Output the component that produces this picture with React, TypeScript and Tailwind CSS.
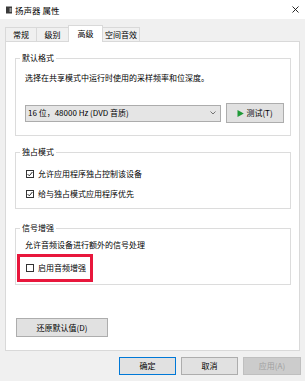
const font = { fontFamily: '"Noto Sans CJK SC", "Noto Sans", sans-serif' };

const tabs = [
  { label: "常规", w: "w-[32px]" },
  { label: "级别", w: "w-[33px]" },
  { label: "高级", w: "w-[35px]", active: true },
  { label: "空间音效", w: "w-[38px]" },
];

function CheckBox({ checked }: { checked?: boolean }) {
  return (
    <span className="flex h-[8px] w-[8px] shrink-0 items-center justify-center border border-[#333] bg-white">
      {checked && (
        <svg width="6" height="6" viewBox="0 0 6 6">
          <path d="M0.6 3.1 L2.3 4.8 L5.4 1" fill="none" stroke="#222" strokeWidth="1" />
        </svg>
      )}
    </span>
  );
}

function Group({ label, className, children }: { label: string; className: string; children: React.ReactNode }) {
  return (
    <div className={`relative ml-[9px] w-[276px] border border-[#dcdcdc] ${className}`}>
      <span className="absolute -top-[6px] left-[4px] bg-white px-[2px] text-[8px] leading-[10px] text-black">
        {label}
      </span>
      {children}
    </div>
  );
}

export default function App() {
  return (
    <div className="h-[381px] w-[305px] overflow-hidden bg-[#f0f0f0] text-black" style={font}>
      {/* title bar */}
      <div className="flex h-[19px] items-center bg-white pl-[6px] pr-[6px]">
        <svg width="7" height="8" viewBox="0 0 7 8" className="mr-[2px]">
          <rect x="0" y="0.5" width="6" height="7" fill="#3a3a3a" />
          <rect x="3.5" y="2" width="2" height="4" fill="#9a9a9a" />
        </svg>
        <span className="text-[8.5px] leading-[10px]">扬声器 属性</span>
        <svg width="7" height="7" viewBox="0 0 7 7" className="ml-auto">
          <path d="M0.5 0.5 L6.5 6.5 M6.5 0.5 L0.5 6.5" stroke="#111" strokeWidth="0.9" />
        </svg>
      </div>

      {/* tabs */}
      <div className="flex h-[22px] items-end pl-[5px] pt-[6px]">
        {tabs.map((t) =>
          t.active ? (
            <div
              key={t.label}
              className={`relative z-10 -mb-px -ml-px flex h-[17px] items-center justify-center border border-b-0 border-[#d9d9d9] bg-white text-[8px] ${t.w}`}
            >
              {t.label}
            </div>
          ) : (
            <div
              key={t.label}
              className={`-ml-px flex h-[14px] items-center justify-center border border-b-0 border-[#d9d9d9] bg-[#f0f0f0] text-[8px] first:ml-0 ${t.w}`}
            >
              {t.label}
            </div>
          )
        )}
      </div>

      {/* panel */}
      <div className="ml-[5px] w-[295px] border border-[#d9d9d9] bg-white pb-[13px] pt-[16px] text-[8px]">
        <Group label="默认格式" className="h-[78px] pl-[9px] pt-[14px]">
          <div className="leading-[10px]">选择在共享模式中运行时使用的采样频率和位深度。</div>
          <div className="mt-[20px] flex items-center gap-[5px]">
            <div className="flex h-[17px] w-[196px] items-center justify-between border border-[#acacac] bg-[#e5e5e5] pl-[2px] pr-[4px]">
              <span>16 位，48000 Hz (DVD 音质)</span>
              <svg width="6" height="4" viewBox="0 0 6 4">
                <path d="M0.5 0.5 L3 3 L5.5 0.5" fill="none" stroke="#555" strokeWidth="0.8" />
              </svg>
            </div>
            <div className="flex h-[20px] w-[58px] items-center justify-center gap-[2px] border border-[#adadad] bg-[#e1e1e1]">
              <svg width="7" height="7" viewBox="0 0 7 7">
                <path d="M0.5 0 L6.8 3.5 L0.5 7 Z" fill="#1e9a37" />
              </svg>
              <span>测试(T)</span>
            </div>
          </div>
        </Group>

        <Group label="独占模式" className="mt-[16px] h-[57px] pl-[10px] pt-[15px]">
          <div className="flex h-[12px] items-center gap-[4px]">
            <CheckBox checked />
            <span>允许应用程序独占控制该设备</span>
          </div>
          <div className="mt-[8px] flex h-[12px] items-center gap-[4px]">
            <CheckBox checked />
            <span>给与独占模式应用程序优先</span>
          </div>
        </Group>

        <Group label="信号增强" className="mt-[19px] h-[57px] pt-[11px]">
          <div className="ml-[9px] leading-[10px]">允许音频设备进行额外的信号处理</div>
          <div className="ml-[1px] mt-[4px] flex h-[28px] w-[76px] items-center gap-[4px] border-[3px] border-[#e8173c] pl-[6px]">
            <CheckBox />
            <span>启用音频增强</span>
          </div>
        </Group>

        <div className="ml-[10px] mt-[33px] flex h-[19px] w-[92px] items-center justify-center border border-[#adadad] bg-[#e1e1e1]">
          还原默认值(D)
        </div>
      </div>

      {/* dialog buttons */}
      <div className="mt-[6px] flex justify-end gap-[5px] pr-[4px] text-[8px]">
        <div className="flex h-[18px] w-[57px] items-center justify-center border border-[#0078d7] bg-[#e1e1e1]">确定</div>
        <div className="flex h-[18px] w-[57px] items-center justify-center border border-[#adadad] bg-[#e1e1e1]">取消</div>
        <div className="flex h-[18px] w-[58px] items-center justify-center border border-[#bfbfbf] bg-[#cccccc] text-[#a0a0a0]">
          应用(A)
        </div>
      </div>
    </div>
  );
}
